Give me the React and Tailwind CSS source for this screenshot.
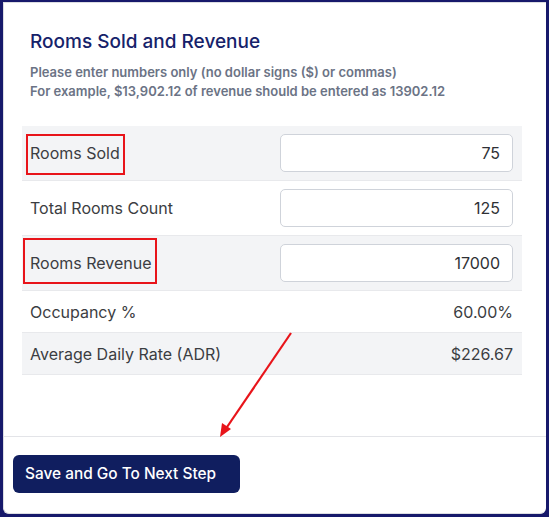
export default function App() {
  const rows = [
    { label: "Rooms Sold", value: "75", input: true, shade: true },
    { label: "Total Rooms Count", value: "125", input: true, shade: false },
    { label: "Rooms Revenue", value: "17000", input: true, shade: true },
    { label: "Occupancy %", value: "60.00%", input: false, shade: false },
    { label: "Average Daily Rate (ADR)", value: "$226.67", input: false, shade: true },
  ];

  return (
    <div
      className="relative w-[549px] h-[517px] bg-[#17196b] pt-[2px] pl-[3px] pr-[3px] pb-[3px]"
      style={{ fontFamily: "Inter, 'Noto Sans', sans-serif" }}
    >
      <div className="h-full bg-white border border-r-0 border-[#dcdde2] rounded-b-md flex flex-col">
        <div className="pl-[26px] pr-[24px] pt-[25px] flex-1">
          <h1 className="text-[19px] leading-[28px] text-[#16226a] font-medium">
            Rooms Sold and Revenue
          </h1>
          <p className="mt-[7px] text-[13px] leading-[19px] font-semibold text-[#6b7385]">
            Please enter numbers only (no dollar signs ($) or commas)
            <br />
            For example, $13,902.12 of revenue should be entered as 13902.12
          </p>
          <div className="mt-[25px] ml-[-8px] w-[500px]">
            {rows.map((r) => (
              <div
                key={r.label}
                className={
                  "flex items-center justify-between pl-[8px] pr-[9px] border-b border-[#e8e9ec] " +
                  (r.shade ? "bg-[#f3f4f6] " : "bg-white ") +
                  (r.input ? "h-[55px]" : "h-[42px]")
                }
              >
                <span className="text-[16px] text-[#3b3d42]">{r.label}</span>
                {r.input ? (
                  <input
                    readOnly
                    value={r.value}
                    className="w-[233px] h-[38px] bg-white border border-[#cfd3da] rounded-[5px] text-right pr-[12px] text-[16px] text-[#2e3035] outline-none"
                    style={{ fontFamily: "Inter, 'Noto Sans', sans-serif" }}
                  />
                ) : (
                  <span className="text-[16px] text-[#3b3d42]">{r.value}</span>
                )}
              </div>
            ))}
          </div>
        </div>
        <div className="border-t border-[#e3e4e8] h-[77px] pl-[9px] pt-[18px]">
          <button className="h-[38px] w-[227px] bg-[#101e5f] rounded-[6px] text-white text-[15.4px] font-medium text-left pl-[12px]">
            Save and Go To Next Step
          </button>
        </div>
      </div>

      <div className="absolute left-[26px] top-[134px] w-[99px] h-[41px] border-2 border-[#e8141a]" />
      <div className="absolute left-[23px] top-[238px] w-[134px] h-[46px] border-2 border-[#e8141a]" />

      <svg className="absolute left-0 top-0" width="549" height="517" viewBox="0 0 549 517">
        <line x1="291" y1="333" x2="225" y2="430" stroke="#e8141a" strokeWidth="2.2" />
        <polygon points="220,437 222,423 231,429" fill="#e8141a" />
      </svg>
    </div>
  );
}
